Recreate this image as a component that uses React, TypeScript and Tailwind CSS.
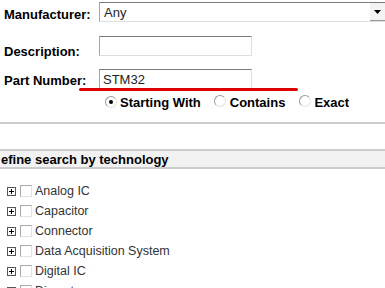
import React from 'react';

const font = { fontFamily: '"Liberation Sans", Arial, sans-serif' };

function Radio({ checked }: { checked?: boolean }) {
  return (
    <span className="relative inline-block w-[12px] h-[12px] rounded-full border border-t-[#9a9a9a] border-l-[#9a9a9a] border-r-[#e4e4e4] border-b-[#e4e4e4] bg-white shrink-0">
      {checked && <span className="absolute left-[3px] top-[3px] w-[4px] h-[4px] rounded-full bg-black" />}
    </span>
  );
}

function PlusBox() {
  return (
    <svg width="9" height="9" viewBox="0 0 9 9" className="shrink-0">
      <rect x="0.5" y="0.5" width="8" height="8" fill="white" stroke="#555" />
      <path d="M2 4.5H7M4.5 2V7" stroke="#000" />
    </svg>
  );
}

function TreeItem({ label }: { label: string }) {
  return (
    <div className="flex items-center h-[20px] pl-[7px]">
      <PlusBox />
      <span className="ml-[4px] w-[12px] h-[12px] border border-t-[#a8a8a8] border-l-[#a8a8a8] border-r-[#e2e2e2] border-b-[#e2e2e2] bg-white shrink-0" />
      <span className="ml-[3px] text-[12.5px] leading-[14px] text-[#333]">{label}</span>
    </div>
  );
}

const inputCls =
  'h-[20px] bg-white border border-t-[#7a7a7a] border-l-[#a5a5a5] border-r-[#dedede] border-b-[#dedede]';

export default function App() {
  const items = ['Analog IC', 'Capacitor', 'Connector', 'Data Acquisition System', 'Digital IC', 'Discrete'];

  return (
    <div className="w-[385px] h-[288px] overflow-hidden bg-white text-black" style={font}>
      <div className="relative pt-[2px]">
        {/* Manufacturer */}
        <div className="flex items-start h-[20px]">
          <label className="w-[99px] pl-[4px] mt-[5px] text-[13px] leading-[15px] font-bold">Manufacturer:</label>
          <div className={`flex-1 flex items-center ${inputCls} border-r-0`}>
            <span className="pl-[4px] text-[13px] leading-[15px] text-[#222] flex-1">Any</span>
            <span className="w-[15px] h-[18px] flex items-center justify-center border-b border-[#9a9a9a] bg-[#f4f4f4]">
              <svg width="7" height="4" viewBox="0 0 7 4"><path d="M0 0H7L3.5 4Z" fill="#000" /></svg>
            </span>
          </div>
        </div>

        {/* Description */}
        <div className="flex items-start h-[20px] mt-[14px]">
          <label className="w-[99px] pl-[4px] mt-[8px] text-[13px] leading-[15px] font-bold">Description:</label>
          <div className={`w-[153px] ${inputCls}`} />
        </div>

        {/* Part number */}
        <div className="flex items-start h-[20px] mt-[13px]">
          <label className="w-[99px] pl-[4px] mt-[4px] text-[13px] leading-[15px] font-bold">Part Number:</label>
          <div className={`w-[153px] flex items-center ${inputCls}`}>
            <span className="pl-[3px] text-[13px] leading-[15px] text-[#222]">STM32</span>
          </div>
        </div>

        {/* annotation underline */}
        <div className="absolute left-[79px] top-[88px] w-[219px] h-[3px] rounded-full bg-[#e00000]" />

        {/* match mode */}
        <div className="flex items-center h-[16px] mt-[5px] pl-[105px] text-[13px] leading-[15px] font-bold">
          <Radio checked />
          <span className="ml-[3px]">Starting With</span>
          <span className="ml-[13px]"><Radio /></span>
          <span className="ml-[4px]">Contains</span>
          <span className="ml-[14px]"><Radio /></span>
          <span className="ml-[3px]">Exact</span>
        </div>

        <div className="mt-[12px] h-[2px] bg-[#cccccc]" />

        {/* technology header */}
        <div className="mt-[25px] h-[20px] bg-[#f2f2f2] border-y-2 border-[#cccccc] flex items-center text-[13px] leading-[15px] font-bold pl-[1px]">
          efine search by technology
        </div>

        <div className="mt-[12px]">
          {items.map((it) => (
            <TreeItem key={it} label={it} />
          ))}
        </div>
      </div>
    </div>
  );
}
